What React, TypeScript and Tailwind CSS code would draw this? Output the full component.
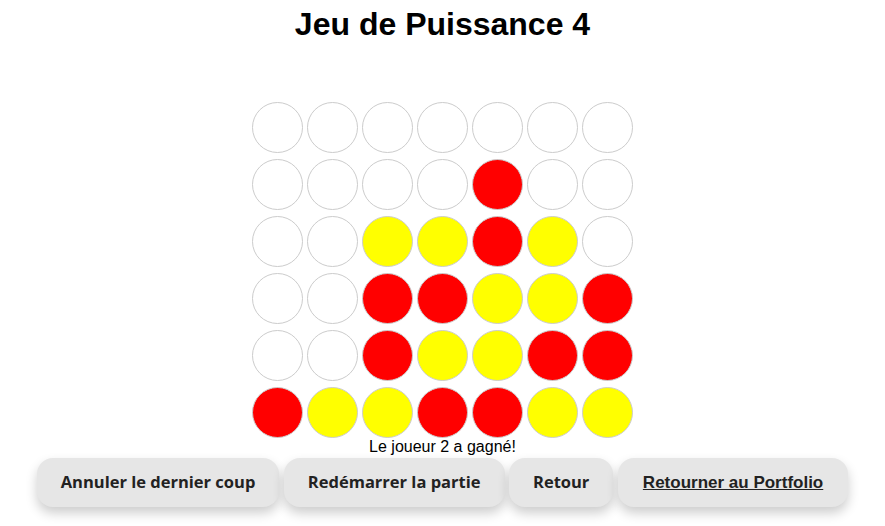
const board: string[] = [
  '.......',
  '....R..',
  '..YYRY.',
  '..RRYYR',
  '..RYYRR',
  'RYYRRYY',
];

function Cell({ v }: { v: string }) {
  const color = v === 'R' ? 'bg-[#ff0000]' : v === 'Y' ? 'bg-[#ffff00]' : 'bg-white';
  return <div className={`h-[51px] w-[51px] rounded-full border border-[#cccccc] ${color}`} />;
}

export default function App() {
  return (
    <div className="flex min-h-screen flex-col items-center bg-white font-['Liberation_Sans',Arial,sans-serif] text-black">
      <h1 className="mt-[6px] text-[32px] font-bold leading-[37px]">Jeu de Puissance 4</h1>

      {/* Board */}
      <div className="mt-[59px] flex flex-col gap-[6px]">
        {board.map((row, r) => (
          <div key={r} className="flex gap-[4px]">
            {row.split('').map((v, c) => (
              <Cell key={c} v={v} />
            ))}
          </div>
        ))}
      </div>

      <p className="text-base leading-[18px]">Le joueur 2 a gagné!</p>

      {/* Actions */}
      <div className="mt-[2px] flex gap-[4.5px]">
        <button className="h-[49px] rounded-[16px] bg-[#e6e6e6] px-[24px] font-['Open_Sans',sans-serif] text-[16.5px] font-bold text-[#222] shadow-[0_6px_12px_rgba(0,0,0,0.2)]">
          Annuler le dernier coup
        </button>
        <button className="h-[49px] rounded-[16px] bg-[#e6e6e6] px-[24px] font-['Open_Sans',sans-serif] text-[16.5px] font-bold text-[#222] shadow-[0_6px_12px_rgba(0,0,0,0.2)]">
          Redémarrer la partie
        </button>
        <button className="h-[49px] rounded-[16px] bg-[#e6e6e6] px-[24px] font-['Open_Sans',sans-serif] text-[16.5px] font-bold text-[#222] shadow-[0_6px_12px_rgba(0,0,0,0.2)]">
          Retour
        </button>
        <button className="h-[49px] rounded-[16px] bg-[#e6e6e6] px-[25px] font-['Liberation_Sans',Arial,sans-serif] text-[17px] font-bold text-[#222] underline shadow-[0_6px_12px_rgba(0,0,0,0.2)]">
          Retourner au Portfolio
        </button>
      </div>
    </div>
  );
}
